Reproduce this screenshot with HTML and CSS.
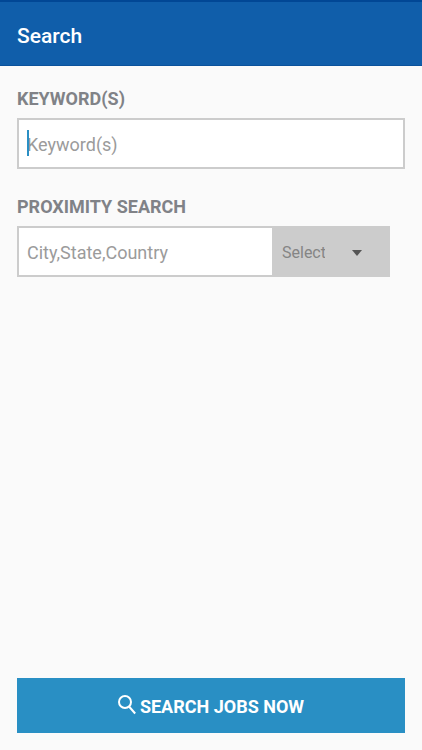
FILE: index.html
```html
<!DOCTYPE html>
<html lang="en">
<head>
<meta charset="utf-8">
<meta name="viewport" content="width=device-width, initial-scale=1">
<title>Search</title>
<link rel="stylesheet" href="styles.css">
</head>
<body>
<header class="app-bar">
  <h1 class="title">Search</h1>
</header>
<form class="search-form">
  <div class="group">
    <label class="label" for="keywords">KEYWORD(S)</label>
    <div class="field">
      <input class="input" id="keywords" type="text" placeholder="Keyword(s)">
      <span class="caret"></span>
    </div>
  </div>
  <div class="group">
    <label class="label" for="place">PROXIMITY SEARCH</label>
    <div class="proximity">
      <input class="input place" id="place" type="text" placeholder="City,State,Country">
      <div class="radius">
        <select class="select" aria-label="Search radius">
          <option>Select</option>
        </select>
        <svg class="arrow" viewBox="0 0 10 6" aria-hidden="true"><path d="M0 0h10L5 6z"/></svg>
      </div>
    </div>
  </div>
  <button class="submit" type="submit">
    <svg class="icon" viewBox="0 0 18 20" aria-hidden="true"><circle cx="7" cy="7" r="6"/><path d="M11 11.500l6.200 7"/></svg>
    <span>SEARCH JOBS NOW</span>
  </button>
</form>
</body>
</html>
```
FILE: styles.css
```css
* {
  box-sizing: border-box;
}

body {
  display: flex;
  flex-direction: column;
  min-height: 100vh;
  margin: 0;
  background: #fafafa;
  font-family: Roboto, sans-serif;
}

.app-bar {
  display: flex;
  align-items: center;
  height: 66px;
  padding: 4px 17px 0;
  border-top: 2px solid #014795;
  border-bottom: 1px solid #0a529c;
  background: #105eaa;
}

.title {
  margin: 0;
  color: #fff;
  font-size: 21px;
  font-weight: 500;
  line-height: 28px;
}

.search-form {
  display: flex;
  flex: 1;
  flex-direction: column;
  gap: 25px;
  padding: 20px 17px 17px;
}

.group {
  display: flex;
  flex-direction: column;
  gap: 6px;
}

.label {
  color: #808287;
  font-size: 18px;
  font-weight: 700;
  line-height: 26px;
}

.field {
  position: relative;
  display: flex;
}

.input {
  flex: 1;
  min-width: 0;
  height: 51px;
  padding: 2px 8px 0;
  border: 2px solid #ccc;
  border-radius: 0;
  outline: 0;
  background: #fff;
  color: #555;
  font-family: inherit;
  font-size: 18px;
}

.input::placeholder {
  color: #9b9b9b;
  opacity: 1;
}

.caret {
  position: absolute;
  top: 12px;
  left: 10px;
  width: 2px;
  height: 26px;
  background: #2a8fc4;
}

.proximity {
  display: flex;
  margin-right: 15px;
}

.place {
  border-right: 0;
}

.radius {
  display: flex;
  align-items: center;
  gap: 27px;
  width: 118px;
  padding: 2px 10px 0;
  background: #ccc;
}

.select {
  width: 43px;
  height: 32px;
  padding: 0;
  border: 0;
  outline: 0;
  appearance: none;
  overflow: hidden;
  background: transparent;
  color: #858585;
  font-family: inherit;
  font-size: 16px;
  text-overflow: clip;
}

.arrow {
  width: 10px;
  height: 6px;
  fill: #555;
}

.submit {
  display: flex;
  align-items: center;
  justify-content: center;
  gap: 4px;
  height: 55px;
  margin-top: auto;
  padding: 2px 0 0;
  border: 0;
  background: #298fc4;
  color: #fff;
  font-family: inherit;
  font-size: 18px;
  font-weight: 700;
}

.icon {
  width: 18px;
  height: 20px;
  margin-bottom: 4px;
  fill: none;
  stroke: #fff;
  stroke-width: 2;
}
```
